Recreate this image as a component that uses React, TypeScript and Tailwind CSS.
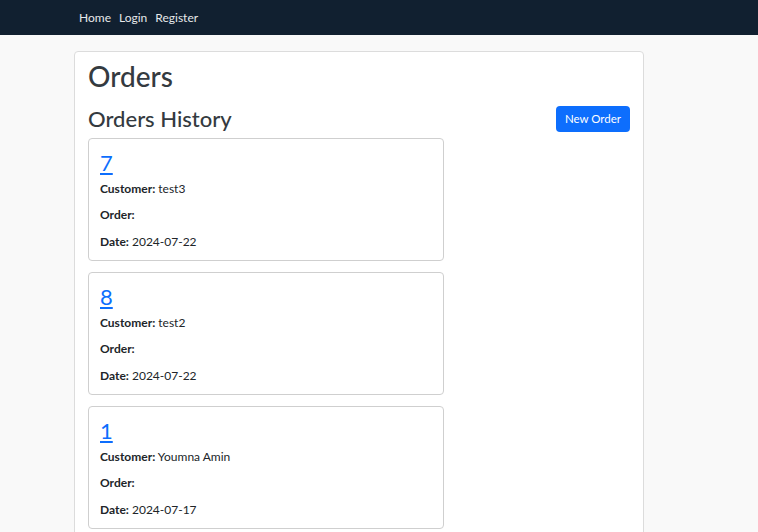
import React from 'react';

const orders = [
  { id: 7, customer: 'test3', date: '2024-07-22' },
  { id: 8, customer: 'test2', date: '2024-07-22' },
  { id: 1, customer: 'Youmna Amin', date: '2024-07-17' },
];

const OrderCard = ({ id, customer, date }: { id: number; customer: string; date: string }) => (
  <div className="w-[356px] rounded border border-[#cfcfcf] bg-white px-[11px] pt-[9px] pb-[10px] text-[12px] text-[#212529]">
    <a href="#" className="block text-[22px] leading-[30px] text-[#0d6efd] underline">
      {id}
    </a>
    <p className="mt-[3px] leading-[16px]">
      <span className="font-bold">Customer:</span> {customer}
    </p>
    <p className="mt-[10px] leading-[16px]">
      <span className="font-bold">Order:</span>
    </p>
    <p className="mt-[11px] leading-[16px]">
      <span className="font-bold">Date:</span> {date}
    </p>
  </div>
);

export default function App() {
  return (
    <div className="min-h-screen bg-[#f9f9f9] font-['Lato',sans-serif]">
      <nav className="flex h-[35px] items-center gap-[8px] bg-[#112030] pl-[79px] text-[12px] text-[#e6e8ea]">
        <a href="#">Home</a>
        <a href="#">Login</a>
        <a href="#">Register</a>
      </nav>
      <main className="ml-[74px] mt-[16px] w-[570px] rounded-t border border-[#dcdcdc] bg-white px-[13px] pt-[6px] pb-[12px]">
        <h1 className="text-[28px] font-medium leading-[36px] text-[#343a40]">Orders</h1>
        <div className="mt-[12px] flex items-center justify-between">
          <h2 className="text-[22px] font-medium leading-[26px] text-[#343a40]">Orders History</h2>
          <button className="h-[26px] rounded bg-[#0d6efd] px-[9px] text-[11.5px] text-white">
            New Order
          </button>
        </div>
        <div className="mt-[6px] flex flex-col gap-[11px]">
          {orders.map((o) => (
            <OrderCard key={o.id} {...o} />
          ))}
        </div>
      </main>
    </div>
  );
}
